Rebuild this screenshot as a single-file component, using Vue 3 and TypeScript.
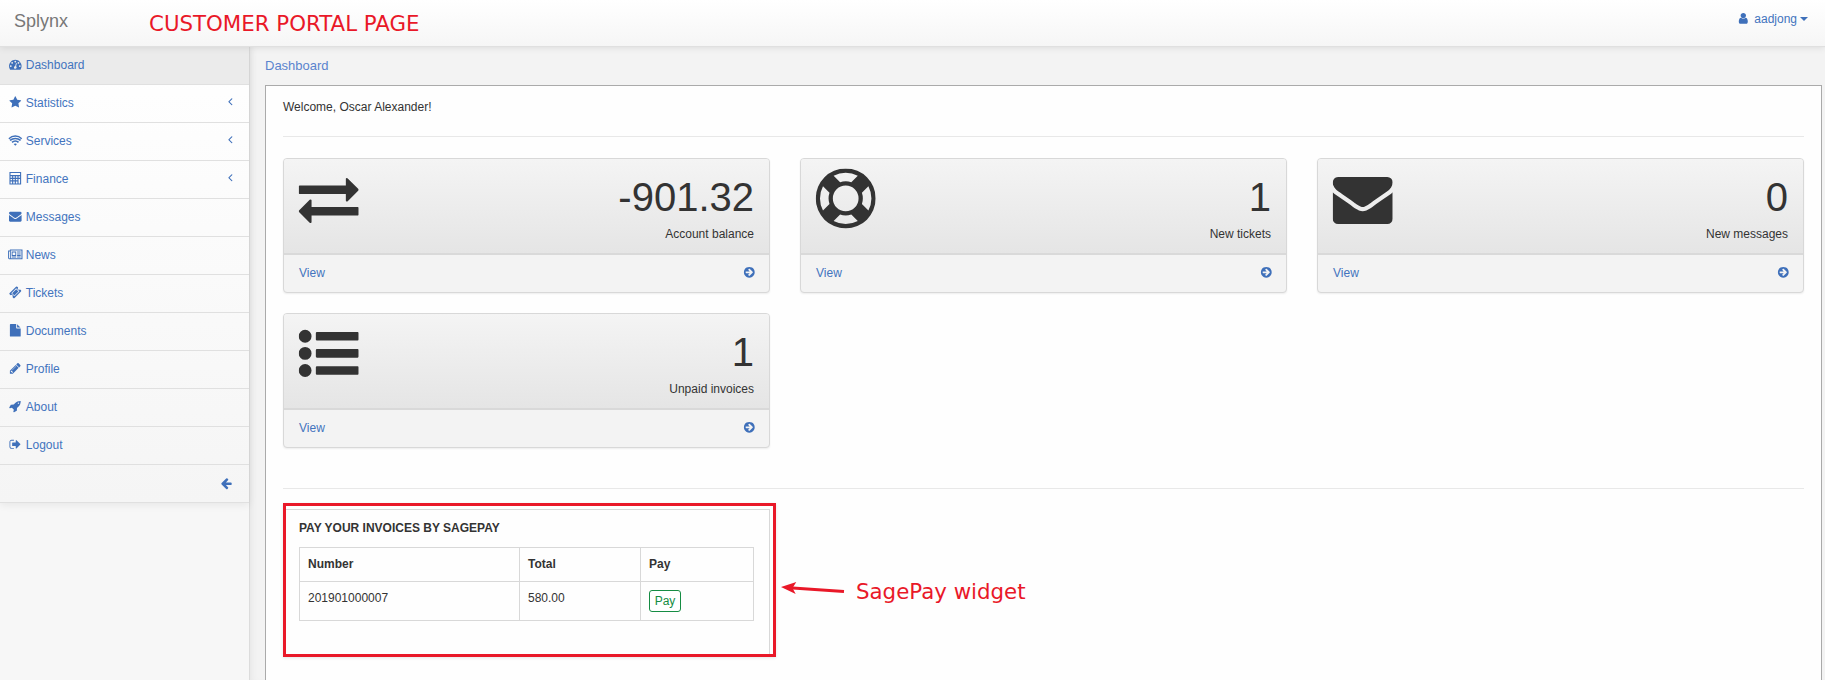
<script setup lang="ts">
interface NavItem { label: string; icon: string; expandable?: boolean; active?: boolean }
interface Card { value: string; label: string; icon: string }

const paths: Record<string, string> = {
  dashboard: 'M384 1152q0-53-37.5-90.5t-90.5-37.5-90.5 37.5-37.5 90.5 37.5 90.5 90.5 37.5 90.5-37.5 37.5-90.5zm192-448q0-53-37.5-90.5t-90.5-37.5-90.5 37.5-37.5 90.5 37.5 90.5 90.5 37.5 90.5-37.5 37.5-90.5zm428 481l101-382q6-26-7.5-48.5t-38.5-29.5-48 6.5-30 39.5l-101 382q-60 5-107 43.5t-63 98.5q-20 77 20 146t117 89 146-20 89-117q16-60-6-117t-72-91zm660-33q0-53-37.5-90.5t-90.5-37.5-90.5 37.5-37.5 90.5 37.5 90.5 90.5 37.5 90.5-37.5 37.5-90.5zm-640-640q0-53-37.5-90.5t-90.5-37.5-90.5 37.5-37.5 90.5 37.5 90.5 90.5 37.5 90.5-37.5 37.5-90.5zm448 192q0-53-37.5-90.5t-90.5-37.5-90.5 37.5-37.5 90.5 37.5 90.5 90.5 37.5 90.5-37.5 37.5-90.5zm320 448q0 261-141 483-19 29-54 29h-1402q-35 0-54-29-141-221-141-483 0-182 71-348t191-286 286-191 348-71 348 71 286 191 191 286 71 348z',
  star: 'M1728 647q0 22-26 48l-363 354 86 500q1 7 1 20 0 21-10.5 35.5t-30.5 14.5q-19 0-40-12l-449-236-449 236q-22 12-40 12-21 0-31.5-14.5t-10.5-35.5q0-6 2-20l86-500-364-354q-25-27-25-48 0-37 56-46l502-73 225-455q19-41 49-41t49 41l225 455 502 73q56 9 56 46z',
  wifi: 'M896 1680L660 1430Q770 1340 896 1340T1132 1430ZM350 1115Q590 880 896 880T1442 1115L1275 1282Q1100 1120 896 1120T517 1282ZM60 835Q440 520 896 520T1732 835L1570 997Q1260 745 896 745T222 997ZM-90 600Q330 190 896 190T1882 600L1740 742Q1380 400 896 400T52 742Z',
  calculator: 'M64 0H1728V1792H64ZM220 150V420H1572V150ZM220 600V810H440V600ZM600 600V810H820V600ZM980 600V810H1200V600ZM1360 600V810H1572V600ZM220 980V1190H440V980ZM600 980V1190H820V980ZM980 980V1190H1200V980ZM220 1360V1640H440V1360ZM600 1360V1640H820V1360ZM980 1360V1640H1200V1360ZM1360 980V1640H1572V980Z',
  envelope: 'M1792 710v794q0 66-47 113t-113 47h-1472q-66 0-113-47t-47-113v-794q44 49 101 87 362 246 497 345 57 42 92.5 65.5t94.5 48 110 24.5h2q51 0 110-24.5t94.5-48 92.5-65.5q170-123 498-345 57-39 100-87zm0-294q0 79-49 151t-122 123q-376 261-468 325-10 7-42.5 31t-54 38.5-52 32.5-57.5 27-50 9h-2q-23 0-50-9t-57.5-27-52-32.5-54-38.5-42.5-31q-91-64-262-182.5t-205-142.5q-62-42-117-115.5t-55-136.5q0-78 41.5-130t118.5-52h1472q65 0 112.5 47t47.5 113z',
  news: 'M128 200H1920V1592H0L-128 1464V340H128ZM256 350V1442H1770V350ZM0 490V1442H128V490ZM384 490H1024V1152H384ZM512 640V1010H896V640ZM384 1216H1024V1340H384ZM1152 490H1664V640H1152ZM1152 768H1664V910H1152ZM1152 1000H1664V1130H1152ZM1152 1216H1664V1340H1152Z',
  ticket: 'M1024 452l316 316-572 572-316-316zm-211 979l618-618q19-19 19-45t-19-45l-362-362q-18-18-45-18t-45 18l-618 618q-19 19-19 45t19 45l362 362q18 18 45 18t45-18zm889-637l-907 908q-37 37-90.5 37t-90.5-37l-126-126q56-56 56-136t-56-136-136-56-136 56l-125-126q-37-37-37-90.5t37-90.5l907-906q37-37 90.5-37t90.5 37l125 125q-56 56-56 136t56 136 136 56 136-56l126 125q37 37 37 90.5t-37 90.5z',
  file: 'M1152 512v-472q22 14 36 28l408 408q14 14 28 36h-472zm-128 32q0 40 28 68t68 28h544v1056q0 40-28 68t-68 28h-1344q-40 0-68-28t-28-68v-1600q0-40 28-68t68-28h800v544z',
  pencil: 'M491 1536l91-91-235-235-91 91v107h128v128h107zm523-928q0-22-22-22-10 0-17 7l-542 542q-7 7-7 17 0 22 22 22 10 0 17-7l542-542q7-7 7-17zm-54-192l416 416-832 832h-416v-416zm683 96q0 53-37 90l-166 166-416-416 166-165q36-38 90-38 53 0 91 38l235 234q37 39 37 91z',
  rocket: 'M1440 448q0-40-28-68t-68-28-68 28-28 68 28 68 68 28 68-28 28-68zm224-288q0 249-75.5 430.5t-253.5 360.5q-81 80-195 176l-20 379q-2 16-16 26l-384 224q-7 4-16 4-12 0-23-9l-64-64q-13-14-8-32l85-276-281-281-276 85q-3 1-9 1-14 0-23-9l-64-64q-17-19-5-39l224-384q10-14 26-16l379-20q96-114 176-195 188-187 358-258t431-71q14 0 24 9.5t10 22.5z',
  logout: 'M704 1440q0 4 1 20t.5 26.5-3 23.5-10 19.5-20.5 6.5h-320q-119 0-203.5-84.5t-84.5-203.5v-704q0-119 84.5-203.5t203.5-84.5h320q13 0 22.5 9.5t9.5 22.5q0 4 1 20t.5 26.5-3 23.5-10 19.5-20.5 6.5h-320q-66 0-113 47t-47 113v704q0 66 47 113t113 47h312l11.5 1 11.5 3 8 5.5 7 9 2 13.5zm928-544q0 26-19 45l-544 544q-19 19-45 19t-45-19-19-45v-288h-448q-26 0-45-19t-19-45v-384q0-26 19-45t45-19h448v-288q0-26 19-45t45-19 45 19l544 544q19 19 19 45z',
  arrowLeft: 'M1664 896v128q0 53-32.5 90.5t-84.5 37.5h-704l293 294q38 36 38 90t-38 90l-75 76q-37 37-90 37-52 0-91-37l-651-652q-37-37-37-90 0-52 37-91l651-650q38-38 91-38 52 0 90 38l75 74q38 38 38 91t-38 91l-293 293h704q52 0 84.5 37.5t32.5 90.5z',
  angleLeft: 'M1200 544q0 13-10 23l-393 393 393 393q10 10 10 23t-10 23l-50 50q-10 10-23 10t-23-10l-466-466q-10-10-10-23t10-23l466-466q10-10 23-10t23 10l50 50q10 10 10 23z',
  user: 'M1536 1399q0 109-62.5 187t-150.5 78h-854q-88 0-150.5-78t-62.5-187q0-85 8.5-160.5t31.5-152 58.5-131 94-89 134.5-34.5q131 128 313 128t313-128q76 0 134.5 34.5t94 89 58.5 131 31.5 152 8.5 160.5zm-256-887q0 159-112.5 271.5t-271.5 112.5-271.5-112.5-112.5-271.5 112.5-271.5 271.5-112.5 271.5 112.5 112.5 271.5z',
  circleRight: 'M1413 896q0-27-18-45l-91-91-362-362q-18-18-45-18t-45 18l-91 91q-18 18-18 45t18 45l189 189h-502q-26 0-45 19t-19 45v128q0 26 19 45t45 19h502l-189 189q-19 19-19 45t19 45l91 91q18 18 45 18t45-18l362-362 91-91q18-18 18-45zm251 0q0 209-103 385.5t-279.5 279.5-385.5 103-385.5-103-279.5-279.5-103-385.5 103-385.5 279.5-279.5 385.5-103 385.5 103 279.5 279.5 103 385.5z',
  exchange: 'M1792 1184v192q0 13-9.5 22.5t-22.5 9.5h-1376v192q0 13-9.5 22.5t-22.5 9.5q-12 0-24-10l-319-320q-9-9-9-22 0-14 9-23l320-320q9-9 23-9 13 0 22.5 9.5t9.5 22.5v192h1376q13 0 22.5 9.5t9.5 22.5zm0-544q0 14-9 23l-320 320q-9 9-23 9-13 0-22.5-9.5t-9.5-22.5v-192h-1376q-13 0-22.5-9.5t-9.5-22.5v-192q0-13 9.5-22.5t22.5-9.5h1376v-192q0-14 9-23t23-9q12 0 24 10l319 319q9 9 9 23z',
  lifeRing: 'M896 0q182 0 348 71t286 191 191 286 71 348-71 348-191 286-286 191-348 71-348-71-286-191-191-286-71-348 71-348 191-286 286-191 348-71zm0 128q-190 0-361 90l194 194q82-28 167-28t167 28l194-194q-171-90-361-90zm-678 1129l194-194q-28-82-28-167t28-167l-194-194q-90 171-90 361t90 361zm678 407q190 0 361-90l-194-194q-82 28-167 28t-167-28l-194 194q171 90 361 90zm0-384q159 0 271.5-112.5t112.5-271.5-112.5-271.5-271.5-112.5-271.5 112.5-112.5 271.5 112.5 271.5 271.5 112.5zm484-217l194 194q90-171 90-361t-90-361l-194 194q28 82 28 167t-28 167z',
  list: 'M384 1408a192 192 0 1 1-384 0a192 192 0 1 1 384 0zM384 896a192 192 0 1 1-384 0a192 192 0 1 1 384 0zM384 384a192 192 0 1 1-384 0a192 192 0 1 1 384 0zM544 256h1216q32 0 32 32v192q0 32-32 32h-1216q-32 0-32-32v-192q0-32 32-32zM544 768h1216q32 0 32 32v192q0 32-32 32h-1216q-32 0-32-32v-192q0-32 32-32zM544 1280h1216q32 0 32 32v192q0 32-32 32h-1216q-32 0-32-32v-192q0-32 32-32z',
}

const nav: NavItem[] = [
  { label: 'Dashboard', icon: 'dashboard', active: true },
  { label: 'Statistics', icon: 'star', expandable: true },
  { label: 'Services', icon: 'wifi', expandable: true },
  { label: 'Finance', icon: 'calculator', expandable: true },
  { label: 'Messages', icon: 'envelope' },
  { label: 'News', icon: 'news' },
  { label: 'Tickets', icon: 'ticket' },
  { label: 'Documents', icon: 'file' },
  { label: 'Profile', icon: 'pencil' },
  { label: 'About', icon: 'rocket' },
  { label: 'Logout', icon: 'logout' },
]

const cards: Card[] = [
  { value: '-901.32', label: 'Account balance', icon: 'exchange' },
  { value: '1', label: 'New tickets', icon: 'lifeRing' },
  { value: '0', label: 'New messages', icon: 'envelope' },
  { value: '1', label: 'Unpaid invoices', icon: 'list' },
]

const invoices = [{ number: '201901000007', total: '580.00' }]
</script>

<template>
  <div class="page">
    <header class="topbar">
      <span class="brand">Splynx</span>
      <span class="note title-note">CUSTOMER PORTAL PAGE</span>
      <a class="account">
        <svg class="icon" viewBox="0 0 1792 1792"><path :d="paths.user" /></svg>
        <span class="account-name">aadjong</span>
        <i class="caret"></i>
      </a>
    </header>

    <div class="body">
      <aside class="sidebar">
        <nav class="menu">
          <a v-for="item in nav" :key="item.label" class="menu-item" :class="{ active: item.active }">
            <svg class="icon" viewBox="0 0 1792 1792"><path fill-rule="evenodd" :d="paths[item.icon]" /></svg>
            <span class="menu-label">{{ item.label }}</span>
            <svg v-if="item.expandable" class="icon angle" viewBox="0 0 1792 1792"><path :d="paths.angleLeft" /></svg>
          </a>
          <a class="menu-item collapse">
            <svg class="icon" viewBox="0 0 1792 1792"><path :d="paths.arrowLeft" /></svg>
          </a>
        </nav>
      </aside>

      <main class="main">
        <div class="breadcrumb">Dashboard</div>
        <section class="content">
          <p class="welcome">Welcome, Oscar Alexander!</p>
          <hr class="rule" />
          <div class="cards">
            <article v-for="card in cards" :key="card.label" class="card">
              <div class="card-head">
                <svg class="card-icon" viewBox="0 0 1792 1792"><path :d="paths[card.icon]" /></svg>
                <div class="card-figures">
                  <div class="card-value">{{ card.value }}</div>
                  <div class="card-label">{{ card.label }}</div>
                </div>
              </div>
              <a class="card-foot">
                <span>View</span>
                <svg class="icon" viewBox="0 0 1792 1792"><path :d="paths.circleRight" /></svg>
              </a>
            </article>
          </div>
          <hr class="rule second" />

          <div class="widget-row">
            <div class="highlight">
              <div class="widget">
                <h4 class="widget-title">PAY YOUR INVOICES BY SAGEPAY</h4>
                <table class="table">
                  <colgroup><col class="c-number" /><col class="c-total" /><col class="c-pay" /></colgroup>
                  <thead><tr><th>Number</th><th>Total</th><th>Pay</th></tr></thead>
                  <tbody>
                    <tr v-for="inv in invoices" :key="inv.number">
                      <td>{{ inv.number }}</td>
                      <td>{{ inv.total }}</td>
                      <td><button class="pay">Pay</button></td>
                    </tr>
                  </tbody>
                </table>
              </div>
            </div>
            <svg class="pointer" viewBox="0 0 64 14">
              <path d="M8 5.7L63 9.5" stroke="#e91828" stroke-width="3" fill="none" />
              <path d="M0 5L15.3 0L11.5 6L14.7 12Z" fill="#e91828" />
            </svg>
            <span class="note widget-note">SagePay widget</span>
          </div>
        </section>
      </main>
    </div>
  </div>
</template>

<style>
body { margin: 0; overflow: hidden; background: #f3f3f3; }
</style>

<style scoped>
.page { box-sizing: border-box; width: 100%; height: 680px; display: flex; flex-direction: column; overflow: hidden; background: #f3f3f3; color: #333; font-family: "Liberation Sans", Arial, sans-serif; font-size: 12px; line-height: 17px; }
.page * { box-sizing: border-box; }
.icon { width: 12.6px; height: 12.6px; fill: #3f70ba; flex: none; overflow: visible; }
.note { font-family: "DejaVu Sans", sans-serif; font-size: 21.33px; line-height: 24px; color: #e91828; white-space: nowrap; }

.topbar { flex: none; height: 47px; display: flex; align-items: flex-start; background: linear-gradient(#fff, #f6f6f6); border-bottom: 1px solid #e0e0e0; box-shadow: 0 1px 7px rgba(0, 0, 0, .09); position: relative; z-index: 2; }
.brand { width: 134px; padding: 11px 0 0 14px; font-size: 18px; line-height: 20px; color: #777; }
.title-note { padding: 12px 0 0 15px; }
.account { margin-left: auto; padding: 11px 17px 0 0; display: flex; align-items: flex-start; color: #4374be; }
.account .icon { margin: 1px 5px 0 0; }
.account .caret { margin: 6px 0 0 3px; border: 4px solid transparent; border-top-color: #3f70ba; border-bottom: 0; }

.body { flex: 1; display: flex; min-height: 0; }
.sidebar { width: 250px; flex: none; background: #f7f7f7; border-right: 1px solid #dcdcdc; }
.menu { background: linear-gradient(#fff, #f5f5f5); box-shadow: 0 2px 8px rgba(0, 0, 0, .07); }
.menu-item { height: 38px; display: flex; align-items: center; padding: 0 16px 0 8.5px; border-bottom: 1px solid #e0e0e0; color: #4374be; }
.menu-item.active { background: #ebebeb; }
.menu-item .icon { margin-top: -2px; }
.menu-label { margin: -1px 0 0 4.7px; }
.menu-item .angle { margin: -5px -4px 0 auto; }
.menu-item.collapse { justify-content: flex-end; }
.menu-item.collapse .icon { margin-top: -1px; }

.main { flex: 1; min-width: 0; padding: 0 3px 0 15px; box-shadow: inset 6px 0 8px -6px rgba(0, 0, 0, .08); display: flex; flex-direction: column; }
.breadcrumb { flex: none; height: 38px; padding-top: 10px; font-size: 13px; color: #5a84ce; }
.content { flex: 1; padding: 13px 17px 0; background: #fefefe; border: 1px solid #aaa; border-bottom: 0; }
.welcome { margin: 0; }
.rule { height: 1px; margin: 20px 0 21px; border: 0; background: #e8e8e8; }
.cards { display: grid; grid-template-columns: repeat(3, 1fr); gap: 20px 30px; }
.card { height: 135px; border: 1px solid #d8d8d8; border-radius: 4px; background: #f3f3f3; box-shadow: 0 1px 2px rgba(0, 0, 0, .07); overflow: hidden; }
.card-head { height: 96px; padding: 9px 15px 0; display: flex; justify-content: space-between; border-bottom: 2px solid #d9d9d9; background: linear-gradient(#f4f4f4, #e5e5e5); }
.card-icon { width: 60px; height: 60px; fill: #333; transform: translate(-.3px, .4px); }
.card-figures { text-align: right; }
.card-value { margin-top: 7px; font-size: 40px; line-height: 44px; }
.card-label { margin-top: 7px; }
.card-foot { height: 37px; padding: 0 15px; display: flex; justify-content: space-between; align-items: center; color: #4374be; }
.card-foot .icon { margin: -2px -1.4px 0 0; }
.rule.second { margin: 40px 0 14px; }

.widget-row { display: flex; align-items: flex-start; }
.highlight { width: 493px; height: 154px; padding: 3px 3px 0 0; border: 3px solid #e91828; box-shadow: 0 1px 3px rgba(0, 0, 0, .1); flex: none; }
.widget { height: 145px; padding: 8px 15px 0 13px; border: 1px solid #d8d8d8; border-width: 1px 1px 0 0; }
.widget-title { margin: 2px 0 11px; font-size: 12px; line-height: 16px; font-weight: bold; }
.table { width: 455px; border-collapse: collapse; table-layout: fixed; }
.c-number { width: 220px; }
.c-total { width: 121px; }
.c-pay { width: 113px; }
.table th, .table td { border: 1px solid #d8d8d8; padding: 8px; text-align: left; vertical-align: top; line-height: 17px; }
.table tbody tr { height: 39px; }
.pay { display: block; width: 32px; height: 22px; padding: 0; border: 1px solid #158c43; border-radius: 3px; background: #fff; color: #158c43; font: 12px/19px "Liberation Sans", Arial, sans-serif; }
.pointer { width: 64px; height: 14px; margin: 79px 0 0 5px; }
.widget-note { margin: 77px 0 0 11px; }
</style>
